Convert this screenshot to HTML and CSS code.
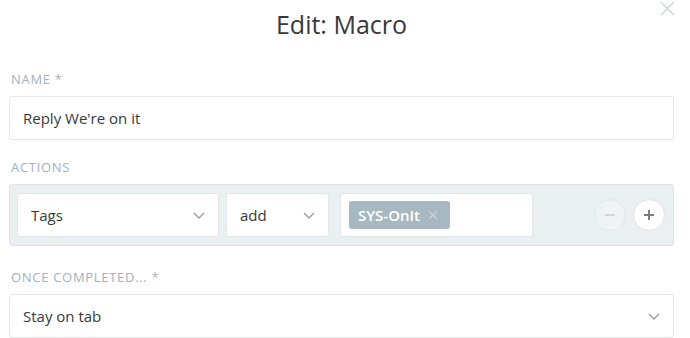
FILE: index.html
```html
<!DOCTYPE html>
<html lang="en">
<head>
  <meta charset="UTF-8">
  <meta name="viewport" content="width=device-width, initial-scale=1.0">
  <title>Edit: Macro</title>
  <link rel="stylesheet" href="styles.css">
</head>
<body>
  <div class="modal">
    <div class="modal-header">
      <h1 class="modal-title">Edit: Macro</h1>
      <button class="modal-close" aria-label="Close">
        <svg width="15" height="15" viewBox="0 0 15 15"><path d="M1 1 L14 14 M14 1 L1 14" stroke="#cfd3d5" stroke-width="1.4" fill="none"/></svg>
      </button>
    </div>

    <div class="field">
      <label class="field-label">Name *</label>
      <div class="control">
        <span class="control-text">Reply We're on it</span>
      </div>
    </div>

    <div class="field field-actions">
      <label class="field-label">Actions</label>
      <div class="actions">
        <div class="control control-select select-attr">
          <span class="control-text">Tags</span>
          <svg class="chevron" width="12" height="7" viewBox="0 0 12 7"><path d="M1 1 L6 6 L11 1" stroke="#9a9c9e" stroke-width="1.4" fill="none"/></svg>
        </div>
        <div class="control control-select select-op">
          <span class="control-text">add</span>
          <svg class="chevron" width="12" height="7" viewBox="0 0 12 7"><path d="M1 1 L6 6 L11 1" stroke="#9a9c9e" stroke-width="1.4" fill="none"/></svg>
        </div>
        <div class="control tag-input">
          <span class="tag">SYS-OnIt
            <svg class="tag-remove" width="10" height="10" viewBox="0 0 10 10"><path d="M1 1 L9 9 M9 1 L1 9" stroke="#c9d3d8" stroke-width="1.3" fill="none"/></svg>
          </span>
        </div>
        <div class="row-buttons">
          <button class="round-btn round-btn-disabled" aria-label="Remove">
            <svg width="14" height="14" viewBox="0 0 14 14"><path d="M2 7 H12" stroke="#d3d7d9" stroke-width="2" fill="none"/></svg>
          </button>
          <button class="round-btn" aria-label="Add">
            <svg width="14" height="14" viewBox="0 0 14 14"><path d="M2 7 H12 M7 2 V12" stroke="#7b7e80" stroke-width="2" fill="none"/></svg>
          </button>
        </div>
      </div>
    </div>

    <div class="field">
      <label class="field-label">Once completed... *</label>
      <div class="control control-select">
        <span class="control-text">Stay on tab</span>
        <svg class="chevron" width="12" height="7" viewBox="0 0 12 7"><path d="M1 1 L6 6 L11 1" stroke="#9a9c9e" stroke-width="1.4" fill="none"/></svg>
      </div>
    </div>
  </div>
</body>
</html>
```

FILE: styles.css
```css
html, body {
  margin: 0;
  padding: 0;
  background-color: #ffffff;
  font-family: "Open Sans", "Noto Sans", sans-serif;
  color: #38393b;
  -webkit-font-smoothing: antialiased;
}
.modal {
  position: relative;
  padding: 0 16px 0 9px;
}
.modal-header {
  height: 58px;
  display: flex;
  justify-content: center;
}
.modal-title {
  margin: 0;
  padding-top: 6px;
  font-size: 25px;
  font-weight: 400;
  line-height: 36px;
  color: #38393b;
}
.modal-close {
  position: absolute;
  top: 1px;
  right: 15px;
  padding: 0;
  border: none;
  background: none;
  width: 15px;
  height: 15px;
  cursor: pointer;
}
.field {
  margin-bottom: 6px;
}
.field-actions {
  margin-bottom: 10px;
}
.field-label {
  display: block;
  box-sizing: border-box;
  height: 38px;
  padding: 5px 0 0 2px;
  line-height: 33px;
  font-size: 13px;
  text-transform: uppercase;
  letter-spacing: 0.7px;
  color: #a3b2ba;
}
.control {
  box-sizing: border-box;
  height: 44px;
  display: flex;
  align-items: center;
  padding: 0 13px;
  background: #ffffff;
  border: 1px solid #e3e7e9;
  border-radius: 3px;
}
.control-text {
  font-size: 15px;
  color: #38393b;
}
.control-select {
  justify-content: space-between;
}
.chevron {
  flex: none;
}
.actions {
  box-sizing: border-box;
  height: 62px;
  display: flex;
  align-items: center;
  padding: 0 8px 0 7px;
  background: #eaeff2;
  border: 1px solid #dfe4e7;
  border-radius: 3px;
}
.select-attr {
  width: 202px;
  margin-right: 7px;
}
.select-op {
  width: 103px;
  margin-right: 11px;
}
.tag-input {
  width: 193px;
  padding: 0 8px;
}
.tag {
  display: inline-flex;
  align-items: center;
  gap: 8px;
  height: 28px;
  padding: 0 10px 0 9px;
  box-sizing: border-box;
  width: 101px;
  background: #a7b8c0;
  border-radius: 3px;
  color: #ffffff;
  font-size: 15px;
  font-weight: 600;
}
.row-buttons {
  margin-left: auto;
  display: flex;
  gap: 7px;
}
.round-btn {
  box-sizing: border-box;
  width: 32px;
  height: 32px;
  padding: 0;
  border-radius: 50%;
  border: 1px solid #dfe3e5;
  background: #ffffff;
  display: flex;
  align-items: center;
  justify-content: center;
  cursor: pointer;
}
.round-btn-disabled {
  background: #f0f3f5;
  border-color: #e2e7ea;
}
```
